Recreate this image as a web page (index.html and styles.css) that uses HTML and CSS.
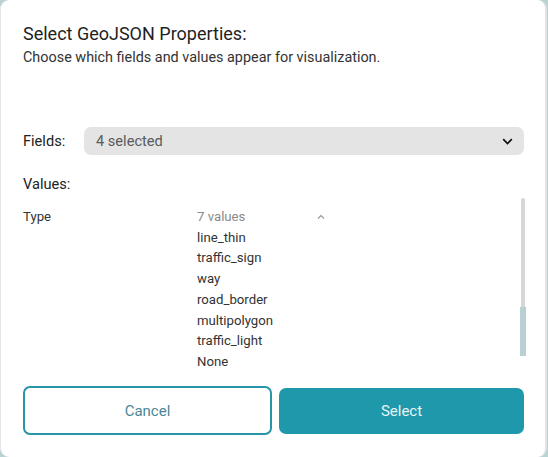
FILE: index.html
```html
<!DOCTYPE html>
<html lang="en">
<head>
  <meta charset="UTF-8">
  <title>Select GeoJSON Properties</title>
  <link rel="stylesheet" href="styles.css">
</head>
<body>
  <div class="dialog">
    <h1 class="title">Select GeoJSON Properties:</h1>
    <p class="subtitle">Choose which fields and values appear for visualization.</p>

    <div class="fields-row">
      <span class="label">Fields:</span>
      <div class="select-box">
        <span>4 selected</span>
        <svg width="11" height="7" viewBox="0 0 11 7"><path d="M1.2 1.2 L5.5 5.5 L9.8 1.2" fill="none" stroke="#111" stroke-width="1.7"/></svg>
      </div>
    </div>

    <div class="label values-label">Values:</div>

    <div class="values-area">
      <div class="values-list">
        <div class="prop-row">
          <span class="prop-name">Type</span>
          <div class="prop-values">
            <div class="values-head">
              <span class="count">7 values</span>
              <svg width="8" height="6" viewBox="0 0 8 6"><path d="M1 4.5 L4 1.5 L7 4.5" fill="none" stroke="#9a9a9a" stroke-width="1.2"/></svg>
            </div>
            <div>line_thin</div>
            <div>traffic_sign</div>
            <div>way</div>
            <div>road_border</div>
            <div>multipolygon</div>
            <div>traffic_light</div>
            <div>None</div>
          </div>
        </div>
      </div>
      <div class="scrollbar">
        <div class="thumb"></div>
      </div>
    </div>

    <div class="actions">
      <button class="btn btn-cancel">Cancel</button>
      <button class="btn btn-select">Select</button>
    </div>
  </div>
</body>
</html>
```

FILE: styles.css
```css
* {
  margin: 0;
  padding: 0;
  box-sizing: border-box;
}

body {
  font-family: Roboto, "Noto Sans", sans-serif;
  background: #b9d2d3;
  height: 457px;
  overflow: hidden;
  color: #222;
}

.dialog {
  width: 547px;
  height: 457px;
  background: #fff;
  border-radius: 9px;
  border-left: 1px solid #e4e6e6;
  border-right: 2px solid #e2e4e4;
  padding: 23px 21px 0 22px;
  display: flex;
  flex-direction: column;
}

.title {
  font-size: 18px;
  font-weight: 400;
  line-height: 22px;
  color: #1f1f1f;
}

.subtitle {
  font-size: 14.4px;
  line-height: 20px;
  margin-top: 3px;
  color: #333;
}

.fields-row {
  display: flex;
  align-items: center;
  margin-top: 59px;
}

.label {
  font-size: 14.6px;
  line-height: 20px;
  color: #222;
}

.fields-row .label {
  width: 61px;
}

.select-box {
  flex: 1;
  height: 28px;
  background: #e4e4e4;
  border-radius: 7px;
  display: flex;
  align-items: center;
  justify-content: space-between;
  padding: 0 11px 0 12px;
  font-size: 14.6px;
  color: #5a5a5a;
}

.values-label {
  margin-top: 19px;
}

.values-area {
  display: flex;
  height: 158px;
  margin-top: 4px;
}

.values-list {
  flex: 1;
  padding-top: 9px;
  font-size: 13.2px;
  line-height: 20.7px;
  color: #333;
}

.prop-row {
  display: flex;
}

.prop-name {
  width: 174px;
}

.values-head {
  display: flex;
  align-items: center;
  width: 128px;
  justify-content: space-between;
}

.count {
  color: #8a8a8a;
}

.scrollbar {
  width: 6px;
  margin-right: -2px;
  position: relative;
  display: flex;
  flex-direction: column;
  justify-content: flex-end;
  align-items: center;
}

.scrollbar::before {
  content: "";
  position: absolute;
  top: 0;
  bottom: 0;
  left: 1px;
  width: 4px;
  border-radius: 2px 2px 0 0;
  background: #d6d6d6;
}

.thumb {
  position: relative;
  width: 6px;
  height: 49px;
  background: #b8d0d1;
}

.actions {
  display: flex;
  align-items: center;
  gap: 7px;
  margin-top: 30px;
}

.btn {
  flex: 1;
  font-family: Roboto, "Noto Sans", sans-serif;
  font-size: 15px;
  border-radius: 7px;
  cursor: pointer;
}

.btn-cancel {
  height: 49px;
  background: #fff;
  border: 2px solid #2795a7;
  color: #4b8796;
}

.btn-select {
  height: 46px;
  background: #1e98aa;
  border: none;
  color: #e8f4f6;
}
```
